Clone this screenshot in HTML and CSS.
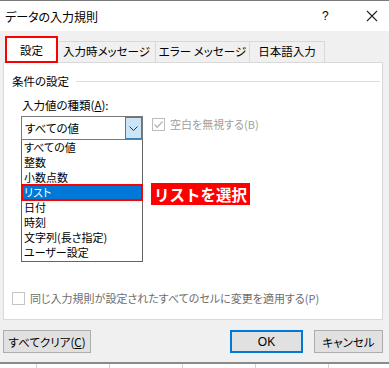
FILE: index.html
```html
<!DOCTYPE html>
<html lang="ja">
<head>
    <meta charset="UTF-8">
    <title>データの入力規則</title>
    <link rel="stylesheet" href="styles.css">
</head>
<body>

<div class="window">
    <div class="titlebar">
        <span class="title">データの入力規則</span>
        <span class="help">?</span>
        <span class="close">
            <svg width="12" height="12" viewBox="0 0 12 12"><path d="M1 1L11 11M11 1L1 11" stroke="#222" stroke-width="1.1" fill="none"/></svg>
        </span>
    </div>

    <div class="dialog-body">
        <div class="tabs">
            <div class="tab active">設定</div>
            <div class="tab tab-input">入力時メッセージ</div>
            <div class="tab tab-error">エラー メッセージ</div>
            <div class="tab tab-ime">日本語入力</div>
        </div>

        <div class="panel">
            <div class="group-title"><span>条件の設定</span><span class="group-line"></span></div>
            <div class="field-label">入力値の種類(<u>A</u>):</div>

            <div class="select-row">
                <div class="select">
                    <span class="select-value">すべての値</span>
                    <span class="drop-btn">
                        <svg width="9" height="5" viewBox="0 0 9 5"><path d="M0.5 0.5L4.5 4.5L8.5 0.5" stroke="#333" stroke-width="1" fill="none"/></svg>
                    </span>
                </div>
                <label class="check disabled">
                    <span class="box">
                        <svg width="11" height="11" viewBox="0 0 11 11"><path d="M1.5 5.5L4.2 8.2L9.5 2.5" stroke="#b5b5b5" stroke-width="1.3" fill="none"/></svg>
                    </span>
                    空白を無視する(B)
                </label>
            </div>

            <div class="list-row">
                <ul class="options">
                    <li>すべての値</li>
                    <li>整数</li>
                    <li>小数点数</li>
                    <li class="selected">リスト</li>
                    <li>日付</li>
                    <li>時刻</li>
                    <li>文字列(長さ指定)</li>
                    <li>ユーザー設定</li>
                </ul>
                <div class="callout">リストを選択</div>
            </div>

            <label class="check apply">
                <span class="box"></span>
                同じ入力規則が設定されたすべてのセルに変更を適用する(P)
            </label>
        </div>

        <div class="buttons">
            <button class="btn btn-clear">すべてクリア(<u>C</u>)</button>
            <span class="spacer"></span>
            <button class="btn btn-ok">OK</button>
            <button class="btn btn-cancel">キャンセル</button>
        </div>
    </div>

    <div class="sheet">
        <span></span><span></span><span></span><span></span><span></span><span></span>
    </div>
</div>

</body>
</html>
```

FILE: styles.css
```css
body {
    margin: 0;
    font-family: "Noto Sans CJK JP", "Noto Sans", sans-serif;
    font-size: 11px;
    font-feature-settings: "palt";
    color: #000;
    background-color: #f0f0f0;
}

.window {
    width: 389px;
    height: 368px;
    overflow: hidden;
    border-top: 1px solid #7a7a7a;
    box-sizing: border-box;
}

.titlebar {
    height: 30px;
    background-color: #fff;
    display: flex;
    align-items: center;
    padding-left: 5px;
    font-size: 12px;
}

.title {
    flex: 1;
}

.help {
    width: 44px;
    font-size: 12px;
    font-family: "Liberation Sans", sans-serif;
}

.close {
    width: 23px;
    display: flex;
}

.dialog-body {
    padding: 0 6px 9px 3px;
}

.tabs {
    display: flex;
    align-items: flex-end;
    height: 26px;
    padding-top: 5px;
    margin-left: 2px;
    font-size: 11.5px;
}

.tab {
    height: 21px;
    line-height: 19px;
    box-sizing: border-box;
    border: 1px solid #d9d9d9;
    border-bottom: none;
    border-left: none;
    text-align: center;
    background-color: #f0f0f0;
}

.tab.active {
    width: 53px;
    height: 27px;
    line-height: 25px;
    margin-bottom: -1px;
    border: 2px solid #ff0000;
    background-color: #fff;
    position: relative;
    z-index: 1;
}

.tab-input { width: 98px; }
.tab-error { width: 94px; }
.tab-ime { width: 75px; }

.panel {
    height: 258px;
    box-sizing: border-box;
    background-color: #fff;
    border: 1px solid #d9d9d9;
    padding-left: 8px;
}

.group-title {
    display: flex;
    align-items: center;
    margin-top: 11px;
    line-height: 14px;
    padding-right: 2px;
    font-size: 11.5px;
}

.group-line {
    flex: 1;
    height: 1px;
    background-color: #dcdcdc;
    margin-left: 7px;
}

.field-label {
    margin: 10px 0 0 10px;
    line-height: 14px;
    font-size: 11.5px;
}

.select-row {
    display: flex;
    align-items: flex-start;
    margin: 4px 0 0 9px;
}

.select {
    width: 122px;
    height: 24px;
    box-sizing: border-box;
    border: 1px solid #7a7a7a;
    display: flex;
    font-size: 11.5px;
}

.select-value {
    flex: 1;
    padding-left: 3px;
    line-height: 22px;
}

.drop-btn {
    width: 17px;
    box-sizing: border-box;
    background-color: #cce4f7;
    border: 1px solid #3c7fb1;
    display: flex;
    align-items: center;
    justify-content: center;
}

.check {
    display: flex;
    align-items: center;
    line-height: 14px;
}

.check .box {
    width: 13px;
    height: 13px;
    box-sizing: border-box;
    border: 1px solid #bcbcbc;
    background-color: #fff;
    display: flex;
    align-items: center;
    justify-content: center;
    margin-right: 5px;
}

.check.disabled {
    color: #a0a0a0;
    margin: 1px 0 0 9px;
}

.list-row {
    display: flex;
    align-items: flex-start;
    margin-left: 9px;
}

.options {
    list-style: none;
    margin: 0;
    padding: 0;
    width: 122px;
    box-sizing: border-box;
    border: 1px solid #646464;
    border-top: none;
    padding-bottom: 1px;
}

.options li {
    height: 15px;
    line-height: 15px;
    padding-left: 2px;
    font-size: 11px;
}

.options li.selected {
    background-color: #0078d7;
    color: #fff;
    outline: 2px solid #ff0000;
    outline-offset: -1px;
}

.callout {
    margin: 43px 0 0 8px;
    height: 22px;
    padding: 0 3px;
    background-color: #ff0000;
    color: #fff;
    font-weight: bold;
    font-size: 15.5px;
    font-feature-settings: normal;
    line-height: 22px;
}

.check.apply {
    margin-top: 29px;
    color: #6d6d6d;
}

.check.apply .box {
    border-color: #c4c4c4;
}

.buttons {
    display: flex;
    margin-top: 10px;
    gap: 11px;
}

.spacer {
    flex: 1;
}

.btn {
    height: 23px;
    padding: 0;
    font-family: inherit;
    font-size: 11.5px;
    font-feature-settings: "palt";
    color: #000;
    background-color: #e1e1e1;
    border: 1px solid #adadad;
}

.btn-clear { width: 88px; }
.btn-cancel { width: 69px; }

.btn-ok {
    width: 73px;
    border: 2px solid #0078d7;
    font-family: "Liberation Sans", sans-serif;
    font-size: 12px;
}

.sheet {
    height: 10px;
    border-top: 2px solid #8a8a8a;
    background-color: #fff;
    display: flex;
}

.sheet span {
    width: 72px;
    border-left: 1px solid #d4d4d4;
    flex: none;
}

.sheet span:first-child {
    width: 36px;
    border-left: none;
}
```
